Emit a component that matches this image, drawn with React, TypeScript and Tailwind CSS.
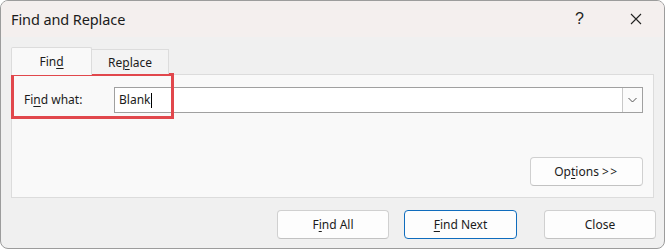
import React from "react";

const U = ({ children }: { children: React.ReactNode }) => (
  <span className="underline underline-offset-[2px] decoration-[1px]">{children}</span>
);

const Btn = ({
  children,
  primary,
  className = "",
}: {
  children: React.ReactNode;
  primary?: boolean;
  className?: string;
}) => (
  <button
    className={
      "h-[29px] rounded-[4px] bg-[#fdfdfd] text-[12px] text-[#1b1b1b] flex items-center justify-center border " +
      (primary ? "border-[#0f6cbd] " : "border-[#d0d0d0] border-b-[#c2c2c2] ") +
      className
    }
  >
    {children}
  </button>
);

export default function App() {
  return (
    <div className="w-[667px] h-[250px] bg-white font-['Noto_Sans',sans-serif] text-[#1b1b1b]">
      <div className="w-[665px] h-[249px] border border-[#9c9c9c] rounded-[8px] overflow-hidden flex flex-col bg-[#f0f0f0]">
        {/* Title bar */}
        <div className="h-[36px] bg-[#f4efee] flex items-center pl-[10px] shrink-0">
          <span className="text-[14.5px] leading-none tracking-[-0.1px]">Find and Replace</span>
          <span className="ml-auto mr-[46px] text-[16px] leading-none font-['Liberation_Sans',sans-serif] text-[#222]">?</span>
          <svg width="12" height="12" viewBox="0 0 12 12" className="mr-[22px]">
            <path d="M1 1 L11 11 M11 1 L1 11" stroke="#222" strokeWidth="1.1" />
          </svg>
        </div>

        {/* Body */}
        <div className="flex-1 px-[10px] pt-[10px] flex flex-col">
          {/* Tabs */}
          <div className="flex items-end h-[27px] relative z-10">
            <div className="w-[81px] h-[28px] -mb-px bg-[#f9f9f9] border border-b-0 border-[#dcdcdc] rounded-t-[2px] flex items-center justify-center text-[12px] pt-[1px]">
              Fin<U>d</U>
            </div>
            <div className="w-[77px] h-[25px] bg-[#f3f3f3] border border-l-0 border-b-0 border-[#dcdcdc] flex items-center justify-center text-[12px] pt-[2px]">
              Re<U>p</U>lace
            </div>
          </div>

          {/* Panel */}
          <div className="relative h-[124px] bg-[#f9f9f9] border border-[#dcdcdc] pt-[12px] pb-[11px] pl-[12px] pr-[10px] flex flex-col justify-between">
            <div className="flex items-center h-[26px]">
              <span className="text-[12px] w-[90px]">
                Fi<U>n</U>d what:
              </span>
              <div className="flex-1 h-[26px] bg-white border border-[#a0a0a0] flex items-center">
                <span className="pl-[4px] text-[12px] leading-none">Blank</span>
                <span className="w-px h-[15px] bg-black ml-px" />
                <div className="ml-auto h-[24px] w-[20px] border-l border-[#c8c8c8] bg-[#fbfbfb] flex items-center justify-center">
                  <svg width="9" height="6" viewBox="0 0 9 6">
                    <path d="M0.5 1 L4.5 5 L8.5 1" fill="none" stroke="#555" strokeWidth="1" />
                  </svg>
                </div>
              </div>
            </div>
            <div className="flex justify-end">
              <Btn className="w-[113px]">
                Op<U>t</U>ions&nbsp;<span className="tracking-[1.5px]">&gt;&gt;</span>
              </Btn>
            </div>
            {/* Red annotation box */}
            <div className="absolute left-[-1px] top-[-2px] w-[163px] h-[46px] border-[3px] border-[#e1474c] pointer-events-none" />
          </div>

          {/* Bottom buttons */}
          <div className="mt-[12px] -mr-[2px] flex justify-end">
            <Btn className="w-[112px]">
              F<U>i</U>nd All
            </Btn>
            <Btn primary className="w-[113px] ml-[15px]">
              <U>F</U>ind Next
            </Btn>
            <Btn className="w-[112px] ml-[27px]">Close</Btn>
          </div>
        </div>
      </div>
    </div>
  );
}
